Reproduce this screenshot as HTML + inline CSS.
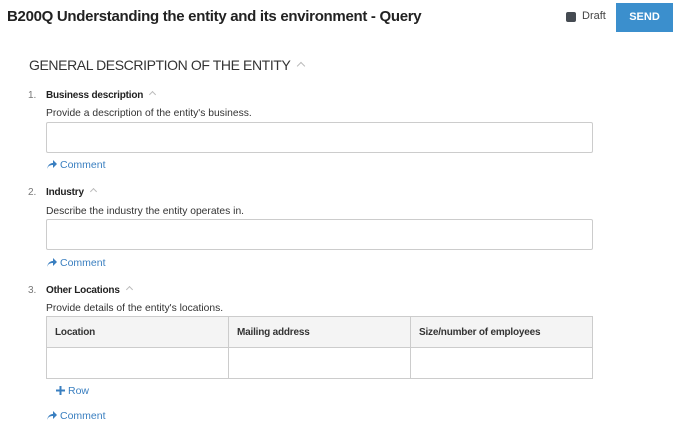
<!DOCTYPE html>
<html><head><meta charset="utf-8"><style>
*{margin:0;padding:0;box-sizing:border-box}
body{width:679px;height:428px;background:#fff;font-family:"Liberation Sans",sans-serif;color:#222;position:relative;overflow:hidden}
.a{position:absolute;white-space:nowrap}
.title{left:7px;top:8px;font-size:15px;font-weight:bold;color:#222;letter-spacing:-0.3px}
.draft{left:566px;top:12px;width:10px;height:10px;background:#454b52;border-radius:2px}
.dl{left:582px;top:10px;font-size:11px;color:#444}
.send{left:616px;top:3px;width:57px;height:29px;background:#3b8fcd;color:#fff;font-weight:bold;font-size:11px;text-align:center;line-height:29px}
.h{left:29px;top:57px;font-size:14px;color:#333;letter-spacing:-0.4px}
.chev{display:inline-block;width:6px;height:6px;border-left:1px solid #bbb;border-top:1px solid #bbb;transform:rotate(45deg);margin-left:8px;vertical-align:1px}
.num{left:28px;font-size:10px;color:#777}
.lbl{left:46px;font-size:10px;font-weight:bold;color:#222;letter-spacing:-0.2px}
.lbl .chev{width:5px;height:5px;margin-left:7px}
.desc{left:46px;font-size:10.3px;color:#333}
.inp{left:46px;width:547px;height:31px;border:1px solid #ccc;border-radius:2px}
.cm{left:47px;font-size:10.5px;color:#3a7fc0}
.cm svg{vertical-align:-1px;margin-right:3px}
table{position:absolute;left:46px;top:316px;width:547px;border-collapse:collapse}
td{border:1px solid #ccc;height:31px;font-size:10px;font-weight:bold;padding-left:8px;color:#333;letter-spacing:-0.2px}
tr:first-child td{background:#f4f4f4}
</style></head><body>
<div class="a title">B200Q Understanding the entity and its environment - Query</div>
<div class="a draft"></div><div class="a dl">Draft</div>
<div class="a send">SEND</div>
<div class="a h">GENERAL DESCRIPTION OF THE ENTITY<span class="chev"></span></div>

<div class="a num" style="top:90px">1.</div>
<div class="a lbl" style="top:90px">Business description<span class="chev"></span></div>
<div class="a desc" style="top:108px">Provide a description of the entity's business.</div>
<div class="a inp" style="top:122px"></div>
<div class="a cm" style="top:159px"><svg width="10" height="9" viewBox="0 0 10 9"><path d="M0 9 C1 4 4 3 6 3 V0 L10 4 L6 8 V5 C3 5 1 6 0 9Z" fill="#3a7fc0"/></svg>Comment</div>

<div class="a num" style="top:187px">2.</div>
<div class="a lbl" style="top:187px">Industry<span class="chev"></span></div>
<div class="a desc" style="top:206px">Describe the industry the entity operates in.</div>
<div class="a inp" style="top:219px"></div>
<div class="a cm" style="top:257px"><svg width="10" height="9" viewBox="0 0 10 9"><path d="M0 9 C1 4 4 3 6 3 V0 L10 4 L6 8 V5 C3 5 1 6 0 9Z" fill="#3a7fc0"/></svg>Comment</div>

<div class="a num" style="top:285px">3.</div>
<div class="a lbl" style="top:285px">Other Locations<span class="chev"></span></div>
<div class="a desc" style="top:303px">Provide details of the entity's locations.</div>
<table><tr><td style="width:182px">Location</td><td style="width:182px">Mailing address</td><td>Size/number of employees</td></tr><tr><td></td><td></td><td></td></tr></table>
<div class="a cm" style="left:56px;top:385px"><svg width="9" height="9" viewBox="0 0 9 9"><path d="M3.5 0h2v3.5H9v2H5.5V9h-2V5.5H0v-2h3.5z" fill="#3a7fc0"/></svg>Row</div>
<div class="a cm" style="top:410px"><svg width="10" height="9" viewBox="0 0 10 9"><path d="M0 9 C1 4 4 3 6 3 V0 L10 4 L6 8 V5 C3 5 1 6 0 9Z" fill="#3a7fc0"/></svg>Comment</div>
</body></html>
